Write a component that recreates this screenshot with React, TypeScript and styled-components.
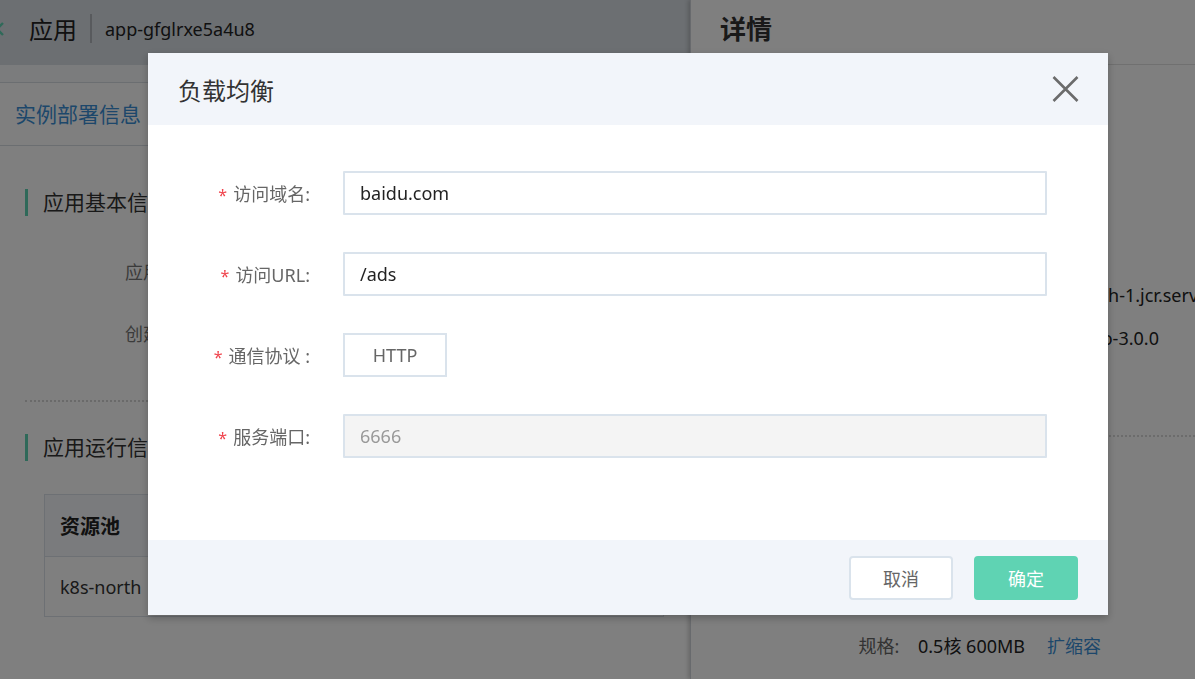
import React from "react";
import styled, { createGlobalStyle } from "styled-components";

const teal = "#5fd3b3";
const blue = "#3a8fd6";

const GlobalStyle = createGlobalStyle`
  html, body {
    margin: 0;
    padding: 0;
    background: #ffffff;
    overflow: hidden;
  }
  body {
    font-family: "Noto Sans", "Noto Sans CJK SC", sans-serif;
    color: #333;
  }
  * {
    box-sizing: border-box;
  }
`;

export default function App() {
  return (
    <>
      <GlobalStyle />
      <Page>
        <AppHeader>
          <BackIcon viewBox="0 0 16 16">
            <path d="M11 2 L5 8 L11 14" fill="none" stroke={teal} strokeWidth="2.4" />
          </BackIcon>
          <AppTitle>应用</AppTitle>
          <HeaderDivider />
          <AppId>app-gfglrxe5a4u8</AppId>
        </AppHeader>

        <Card>
          <Tabs>
            <Tab $active>实例部署信息</Tab>
          </Tabs>
          <CardBody>
            <SectionTitle>应用基本信息</SectionTitle>
            <InfoList>
              <InfoRow>
                <InfoLabel>应用名称:</InfoLabel>
              </InfoRow>
              <InfoRow>
                <InfoLabel>创建时间:</InfoLabel>
              </InfoRow>
            </InfoList>
            <Dotted />
            <SectionTitle>应用运行信息</SectionTitle>
            <Table>
              <thead>
                <tr>
                  <Th>资源池</Th>
                  <Th />
                  <Th />
                </tr>
              </thead>
              <tbody>
                <tr>
                  <Td>k8s-north</Td>
                  <Td />
                  <Td />
                </tr>
              </tbody>
            </Table>
          </CardBody>
        </Card>

        <Drawer>
          <DrawerHeader>详情</DrawerHeader>
          <DrawerSection>
            <DrawerSectionTitle>基本信息</DrawerSectionTitle>
            <DrawerRows>
              <DrawerRow>
                <DrawerLabel>实例名称:</DrawerLabel>
                <DrawerValue>demo-1</DrawerValue>
              </DrawerRow>
              <DrawerRow>
                <DrawerLabel>所在地域:</DrawerLabel>
                <DrawerValue>华北-北京</DrawerValue>
              </DrawerRow>
              <DrawerRow>
                <DrawerLabel>镜像仓库:</DrawerLabel>
                <DrawerValue>jd-hub-jdcloud-cn-north-1.jcr.serv</DrawerValue>
              </DrawerRow>
              <DrawerRow>
                <DrawerLabel>镜像版本:</DrawerLabel>
                <DrawerValue>n/jd-cloud/nginx-demo-3.0.0</DrawerValue>
              </DrawerRow>
            </DrawerRows>
          </DrawerSection>
          <DrawerDotted />
          <DrawerSection>
            <DrawerSectionTitle>配置信息</DrawerSectionTitle>
            <DrawerRows $offset={75}>
              <DrawerRow>
                <DrawerLabel>实例数:</DrawerLabel>
                <DrawerValue>2</DrawerValue>
              </DrawerRow>
              <DrawerRow>
                <DrawerLabel>规格: </DrawerLabel>
                <DrawerValue>
                  0.5核 600MB
                  <LinkText>扩缩容</LinkText>
                </DrawerValue>
              </DrawerRow>
            </DrawerRows>
          </DrawerSection>
        </Drawer>
      </Page>

      <Mask />

      <Modal>
        <ModalHeader>
          <ModalTitle>负载均衡</ModalTitle>
          <CloseButton aria-label="close">
            <svg width="27" height="26" viewBox="0 0 27 26">
              <path d="M1.5 1 L25.5 25 M25.5 1 L1.5 25" stroke="#6b6b6b" strokeWidth="2.6" fill="none" />
            </svg>
          </CloseButton>
        </ModalHeader>
        <ModalBody>
          <Form>
            <FieldLabel>
              <Req>*</Req>访问域名:
            </FieldLabel>
            <TextInput readOnly defaultValue="baidu.com" />

            <FieldLabel>
              <Req>*</Req>访问URL:
            </FieldLabel>
            <TextInput readOnly defaultValue="/ads" />

            <FieldLabel>
              <Req>*</Req>通信协议 :
            </FieldLabel>
            <div>
              <ProtocolBox>HTTP</ProtocolBox>
            </div>

            <FieldLabel>
              <Req>*</Req>服务端口:
            </FieldLabel>
            <TextInput disabled defaultValue="6666" />
          </Form>
        </ModalBody>
        <ModalFooter>
          <Button>取消</Button>
          <Button $primary>确定</Button>
        </ModalFooter>
      </Modal>
    </>
  );
}

/* page under the mask */

const Page = styled.div`
  position: relative;
  width: 100vw;
  height: 679px;
  overflow: hidden;
  background: #f7f8fa;
`;

const AppHeader = styled.div`
  display: flex;
  align-items: center;
  height: 65px;
  padding-bottom: 8px;
  background: #d8dee4;
`;

const BackIcon = styled.svg`
  width: 16px;
  height: 16px;
  margin-left: -8px;
  margin-right: 21px;
`;

const AppTitle = styled.span`
  font-size: 24px;
  color: #222;
`;

const HeaderDivider = styled.span`
  width: 2px;
  height: 29px;
  margin: 0 13px;
  background: #b0b5ba;
`;

const AppId = styled.span`
  font-size: 18px;
  color: #222;
`;

const Card = styled.div`
  margin-top: 17px;
  background: #fff;
  border-top: 1px solid #d6dce2;
  height: 600px;
`;

const Tabs = styled.div`
  display: flex;
  height: 63px;
  align-items: center;
  gap: 40px;
  padding: 0 0 2px 15px;
  border-bottom: 1px solid #d6dce2;
`;

const Tab = styled.span<{ $active?: boolean }>`
  font-size: 21px;
  color: ${(p) => (p.$active ? blue : "#333")};
`;

const CardBody = styled.div`
  padding: 43px 0 0 25px;
  width: 688px;
`;

const SectionTitle = styled.div`
  height: 27px;
  line-height: 27px;
  padding-left: 15px;
  border-left: 3px solid ${teal};
  font-size: 21px;
  color: #333;
  white-space: nowrap;
`;

const InfoList = styled.div`
  margin-top: 24px;
  padding-left: 100px;
`;

const InfoRow = styled.div`
  display: flex;
  height: 62px;
  align-items: center;
  font-size: 18px;
`;

const InfoLabel = styled.span`
  color: #777;
`;

const Dotted = styled.div`
  margin: 36px 0 32px;
  border-top: 2px dotted #d4d4d4;
`;

const Table = styled.table`
  margin: 33px 0 0 19px;
  width: 620px;
  border-collapse: collapse;
  border: 1px solid #dbe1e8;
`;

const Th = styled.th`
  height: 62px;
  padding-left: 15px;
  text-align: left;
  font-size: 20px;
  font-weight: 700;
  color: #222;
  background: #f5f7fa;
  border-bottom: 1px solid #dbe1e8;
`;

const Td = styled.td`
  height: 60px;
  padding-left: 15px;
  font-size: 18px;
  color: #333;
`;

const Drawer = styled.aside`
  position: absolute;
  top: 0;
  right: 0;
  bottom: 0;
  width: 505px;
  background: #fff;
  box-shadow: -2px 0 4px rgba(0, 0, 0, 0.18);
  border-left: 1px solid #d0d4da;
`;

const DrawerHeader = styled.div`
  display: flex;
  align-items: center;
  height: 65px;
  padding: 0 0 9px 29px;
  border-bottom: 1px solid #e0e0e0;
  font-size: 26px;
  font-weight: 700;
  color: #333;
`;

const DrawerSection = styled.div`
  padding: 40px 0 0 29px;
`;

const DrawerSectionTitle = styled.div`
  height: 28px;
  line-height: 28px;
  padding-left: 15px;
  border-left: 3px solid ${teal};
  font-size: 20px;
`;

const DrawerRows = styled.div<{ $offset?: number }>`
  margin-top: ${(p) => p.$offset ?? 54}px;
`;

const DrawerRow = styled.div`
  display: grid;
  grid-template-columns: 184px 1fr;
  column-gap: 14px;
  height: 43px;
  align-items: center;
  font-size: 18px;
  white-space: nowrap;
`;

const DrawerLabel = styled.span`
  text-align: right;
  white-space: pre;
  color: #666;
`;

const DrawerValue = styled.span`
  color: #222;
  overflow: hidden;
`;

const LinkText = styled.span`
  margin-left: 22px;
  color: ${blue};
`;

const DrawerDotted = styled.div`
  margin: 76px 0 0 29px;
  border-top: 2px dotted #d8d8d8;
`;

/* mask and dialog */

const Mask = styled.div`
  position: fixed;
  inset: 0;
  background: rgba(0, 0, 0, 0.5);
`;

const Modal = styled.div`
  position: fixed;
  top: 53px;
  left: 148px;
  width: 960px;
  height: 562px;
  display: flex;
  flex-direction: column;
  background: #fff;
  box-shadow: 0 3px 8px rgba(0, 0, 0, 0.25);
`;

const ModalHeader = styled.div`
  display: flex;
  align-items: center;
  justify-content: space-between;
  height: 72px;
  padding: 0 29px 0 30px;
  background: #f2f5fa;
`;

const ModalTitle = styled.h2`
  margin: 0;
  font-size: 24px;
  font-weight: 400;
  color: #333;
`;

const CloseButton = styled.button`
  display: flex;
  padding: 0;
  border: 0;
  background: none;
  cursor: pointer;
`;

const ModalBody = styled.div`
  flex: 1;
  padding: 46px 61px 0 0;
`;

const Form = styled.div`
  display: grid;
  grid-template-columns: 195px 1fr;
  row-gap: 37px;
  align-items: center;
`;

const FieldLabel = styled.label`
  padding-right: 33px;
  text-align: right;
  font-size: 18px;
  color: #666;
  white-space: nowrap;
`;

const Req = styled.span`
  margin-right: 6px;
  font-size: 16px;
  color: #f0424b;
`;

const TextInput = styled.input`
  width: 100%;
  height: 44px;
  padding: 0 15px;
  border: 2px solid #dae3ec;
  border-radius: 1px;
  outline: none;
  font-family: inherit;
  font-size: 18px;
  color: #222;
  background: #fff;

  &:disabled {
    background: #f4f4f4;
    color: #999;
  }
`;

const ProtocolBox = styled.span`
  display: inline-flex;
  align-items: center;
  justify-content: center;
  width: 104px;
  height: 44px;
  border: 2px solid #dae3ec;
  font-size: 18px;
  color: #666;
`;

const ModalFooter = styled.div`
  display: flex;
  align-items: center;
  justify-content: flex-end;
  gap: 21px;
  height: 75px;
  padding-right: 30px;
  background: #f2f5fa;
`;

const Button = styled.button<{ $primary?: boolean }>`
  width: 104px;
  height: 44px;
  border-radius: 4px;
  border: 2px solid ${(p) => (p.$primary ? teal : "#dae3ec")};
  background: ${(p) => (p.$primary ? teal : "#fff")};
  color: ${(p) => (p.$primary ? "#fff" : "#666")};
  font-family: inherit;
  font-size: 18px;
  cursor: pointer;
`;
